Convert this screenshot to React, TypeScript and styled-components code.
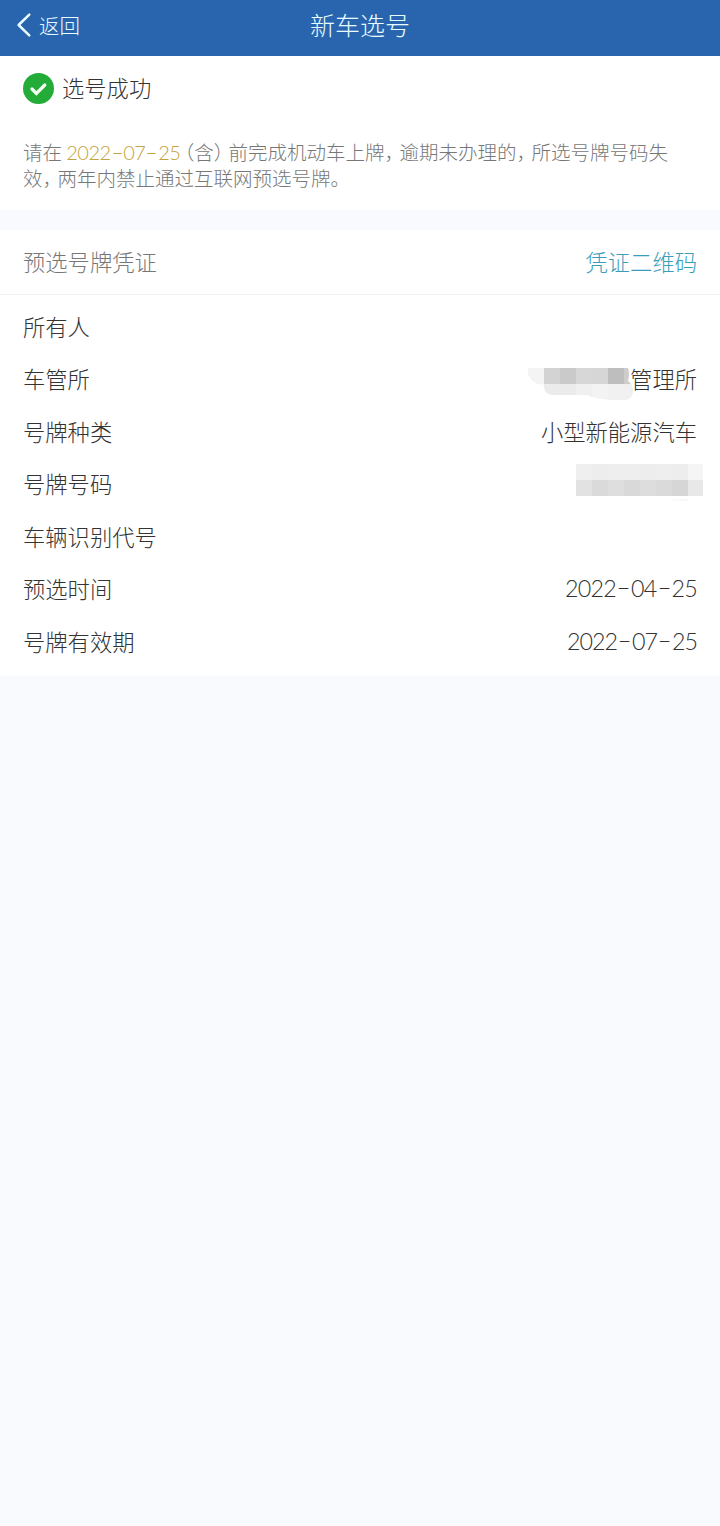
import React from "react";
import styled, { createGlobalStyle } from "styled-components";

const GlobalStyle = createGlobalStyle`
  * { box-sizing: border-box; }
  html, body { margin: 0; background: #f8fafe; }
  body {
    font-family: "Noto Sans CJK SC", sans-serif;
    font-weight: 300;
    color: #333;
  }
`;

const Page = styled.div`
  min-height: 1526px;
  display: flex;
  flex-direction: column;
  background: #f8fafe;
`;

const NavBar = styled.header`
  height: 56px;
  display: grid;
  grid-template-columns: 1fr auto 1fr;
  align-items: center;
  padding: 0 16px 6px;
  background: #2965ae;
  color: #e8fdff;
`;

const BackButton = styled.div`
  display: flex;
  align-items: center;
  gap: 7px;
  font-size: 20.5px;
  line-height: 30px;
`;

const Title = styled.h1`
  margin: 0 0 2px;
  font-size: 25px;
  line-height: 36px;
  font-weight: 300;
`;

const StatusCard = styled.section`
  height: 154px;
  background: #fff;
  padding: 15px 23px 0;
`;

const StatusLine = styled.div`
  display: flex;
  align-items: center;
  gap: 8px;
  height: 34px;
  font-size: 22.3px;
`;

const StatusText = styled.span`
  padding-bottom: 2px;
`;

const Notice = styled.p`
  margin: 34px 0 0;
  font-size: 19.5px;
  line-height: 26px;
  color: #777;
  white-space: nowrap;
`;

const Punct = styled.span<{ $before?: number; $after?: number }>`
  font-feature-settings: "halt" 1;
  margin-left: ${(p) => p.$before ?? 0}px;
  margin-right: ${(p) => p.$after ?? 0}px;
`;

const DateText = styled.span<{ $size: number; $color?: string; $spacing: number }>`
  font-family: Lato, "Noto Sans CJK SC", sans-serif;
  font-weight: 300;
  font-size: ${(p) => p.$size}px;
  letter-spacing: ${(p) => p.$spacing}px;
  color: ${(p) => p.$color ?? "inherit"};
`;

const Dash = styled.span`
  display: inline-block;
  width: 0.64em;
  text-align: center;
  letter-spacing: 0;
  transform: translateY(-1px) scaleX(1.75);
`;

const VoucherCard = styled.section`
  margin-top: 20px;
  height: 446px;
  background: #fff;
`;

const VoucherHeader = styled.div`
  display: flex;
  justify-content: space-between;
  align-items: center;
  height: 65px;
  padding: 0 23px 2px;
  border-bottom: 1px solid #f3f3f3;
  font-size: 22.3px;
  color: #777;
`;

const QrLink = styled.span`
  color: #3c9dbb;
`;

const Rows = styled.div`
  padding: 4.5px 23px 0;
`;

const Row = styled.div`
  display: flex;
  justify-content: space-between;
  align-items: center;
  height: 52.5px;
  font-size: 22.3px;
`;

const Value = styled.span<{ $bleed?: number }>`
  display: flex;
  align-items: center;
  margin-right: ${(p) => -(p.$bleed ?? 0)}px;
`;

const OfficeMask = styled.svg`
  margin: 11px -4px 0 0;
`;

const PlateMask = styled.svg`
  margin-bottom: 1px;
`;

function DateValue({ value, size, color, spacing }: { value: string; size: number; color?: string; spacing: number }) {
  return (
    <DateText $size={size} $color={color} $spacing={spacing}>
      {value.split("-").map((part, i) => (
        <React.Fragment key={i}>
          {i > 0 && <Dash>-</Dash>}
          {part}
        </React.Fragment>
      ))}
    </DateText>
  );
}

function BackIcon() {
  return (
    <svg width="16" height="26" viewBox="0 0 16 26" fill="none" stroke="#e8fdff" strokeWidth="2.5" strokeLinecap="round" strokeLinejoin="round">
      <path d="M13.3 2.7 2.6 13l10.7 10.3" />
    </svg>
  );
}

function SuccessIcon() {
  return (
    <svg width="31" height="31" viewBox="0 0 31 31">
      <circle cx="15.5" cy="15.5" r="15.5" fill="#23ac38" />
      <path d="m9 16 4.4 4.4 8.4-8.4" fill="none" stroke="#f2fff2" strokeWidth="3.2" strokeLinecap="round" />
    </svg>
  );
}

function OfficeMosaic() {
  const top = ["#f4f4f4", "#d3d3d3", "#cacaca", "#d7d7d7", "#d6d6d6", "#bebebe", "#cdcdcd"];
  const bottom = ["#fbfbfb", "#ebebeb", "#ebebeb", "#f0f0f0", "#f3f3f3", "#f1f1f1", "#f0f0f0"];
  return (
    <OfficeMask width="106" height="32" viewBox="0 0 106 32">
      <clipPath id="brush">
        <path d="M0 0H100Q102 6 100 13Q106 17 105 25Q103 32 97 32H84Q66 31 59 27H24Q16 26 16 18Q4 16 0 6Z" />
      </clipPath>
      <g clipPath="url(#brush)" shapeRendering="crispEdges">
        {top.map((c, i) => <rect key={i} x={i * 16} width="16" height="16" fill={c} />)}
        {bottom.map((c, i) => <rect key={i} x={i * 16} y="16" width="16" height="16" fill={c} />)}
      </g>
    </OfficeMask>
  );
}

function PlateMosaic() {
  const top = ["#efefef", "#ededed", "#eeeeee", "#eeeeee", "#ededed", "#eeeeee", "#ededed", "#f5f5f5"];
  const bottom = ["#e2e2e2", "#dadada", "#dedede", "#d9d9d9", "#dddddd", "#dadada", "#d6d6d6", "#e8e8e8"];
  return (
    <PlateMask width="127" height="42" viewBox="0 0 127 42" shapeRendering="crispEdges">
      {top.map((c, i) => <rect key={i} x={i * 16} y="2" width="16" height="16" fill={c} />)}
      {bottom.map((c, i) => <rect key={i} x={i * 16} y="18" width="16" height="16" fill={c} />)}
      <rect x="97" y="37" width="15" height="2" fill="#f9f9f9" />
    </PlateMask>
  );
}

export default function App() {
  return (
    <Page>
      <GlobalStyle />
      <NavBar>
        <BackButton><BackIcon />返回</BackButton>
        <Title>新车选号</Title>
      </NavBar>
      <StatusCard>
        <StatusLine><SuccessIcon /><StatusText>选号成功</StatusText></StatusLine>
        <Notice>
          请在 <DateValue value="2022-07-25" size={20} color="#c4a23e" spacing={-0.55} />
          <Punct $before={4.2}>（</Punct>含<Punct $after={5}>）</Punct>前完成机动车上牌<Punct $after={5.2}>，</Punct>逾期未办理的<Punct $after={5.2}>，</Punct>所选号牌号码失
          <br />
          效<Punct $after={5.2}>，</Punct>两年内禁止通过互联网预选号牌。
        </Notice>
      </StatusCard>
      <VoucherCard>
        <VoucherHeader>
          <span>预选号牌凭证</span>
          <QrLink>凭证二维码</QrLink>
        </VoucherHeader>
        <Rows>
          <Row><span>所有人</span></Row>
          <Row><span>车管所</span><Value><OfficeMosaic />管理所</Value></Row>
          <Row><span>号牌种类</span><Value>小型新能源汽车</Value></Row>
          <Row><span>号牌号码</span><Value $bleed={6}><PlateMosaic /></Value></Row>
          <Row><span>车辆识别代号</span></Row>
          <Row><span>预选时间</span><DateValue value="2022-04-25" size={23.3} spacing={-0.75} /></Row>
          <Row><span>号牌有效期</span><DateValue value="2022-07-25" size={23.3} spacing={-1} /></Row>
        </Rows>
      </VoucherCard>
    </Page>
  );
}
